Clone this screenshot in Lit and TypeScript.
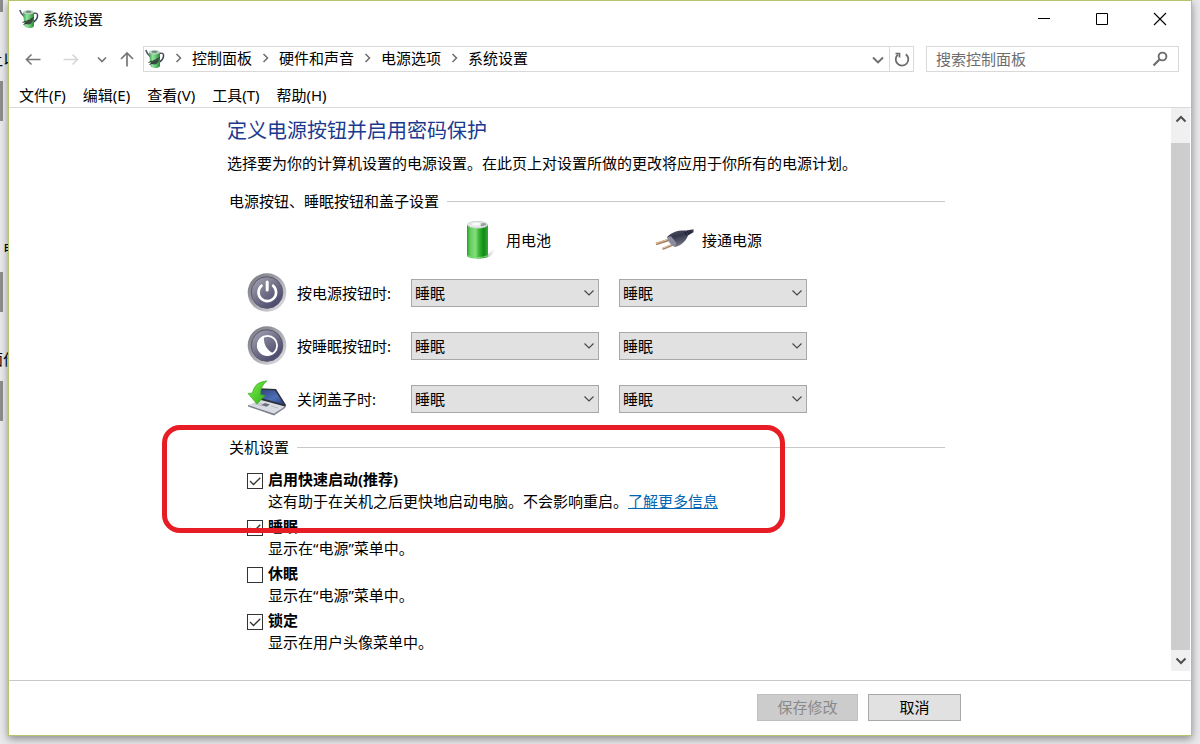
import { LitElement, html, css, svg, nothing } from "lit";
import { customElement, state } from "lit/decorators.js";

interface ActionRow {
  id: string;
  label: string;
  icon: unknown;
}

interface ShutdownOption {
  id: string;
  label: string;
  note: string;
  checked: boolean;
  link?: string;
}

const ACTIONS = ["不采取任何操作", "睡眠", "休眠", "关机"];

const powerPlanIcon = (cls: string) => html`
  <svg class=${cls} viewBox="0 0 20 20" aria-hidden="true">
    <defs>
      <linearGradient id="can" x1="0" x2="1">
        <stop offset="0" stop-color="#3f9a55" />
        <stop offset=".35" stop-color="#8fe79b" />
        <stop offset="1" stop-color="#2c8a3d" />
      </linearGradient>
    </defs>
    <path d="M14 4.500c3.500-1 5 0 4.500 3s-2 4.500-4 5.500" fill="none" stroke="#3c4654" stroke-width="1.500" />
    <path d="M.8 1c.6 2.500 1.800 4 4.400 6.400" fill="none" stroke="#4d5a68" stroke-width="1.500" />
    <path d="M4 3.500h11v13.500c-1 2.700-8 2.700-9.400 0z" fill="url(#can)" />
    <ellipse cx="9.500" cy="3.300" rx="5.500" ry="2.200" fill="#b9cfc0" />
    <ellipse cx="9.500" cy="2.900" rx="3" ry="1.100" fill="#6f8f7a" />
    <path d="M6 13.500c2-3 4.500-3.500 8.500-3l-2 3.500c-2 1.800-4 1.500-5.500 1z" fill="#3a4a3e" />
    <path d="M3.500 13.500l3.500-1.500M4.500 15.500l3-1.500M11 10.500l4-2" stroke="#27332b" />
  </svg>
`;

const batteryIcon = html`
  <svg class="big" viewBox="0 0 40 40" aria-hidden="true">
    <defs>
      <linearGradient id="cell" x1="0" x2="1">
        <stop offset="0" stop-color="#2b9a2b" />
        <stop offset=".15" stop-color="#5fcf59" />
        <stop offset=".4" stop-color="#86dc7e" />
        <stop offset=".58" stop-color="#35b331" />
        <stop offset=".8" stop-color="#0d8a17" />
        <stop offset="1" stop-color="#3aa63a" />
      </linearGradient>
      <linearGradient id="cellShade" x1="0" x2="1">
        <stop offset="0" stop-color="#888" stop-opacity=".8" />
        <stop offset="1" stop-color="#ccc" stop-opacity="0" />
      </linearGradient>
    </defs>
    <path d="M27 36l9-8c1 4-3 9-10 10z" fill="url(#cellShade)" />
    <path d="M8 5v31c2 3.500 19 3.500 21 0V5z" fill="url(#cell)" />
    <path d="M8.500 35.500c3 2.600 17 2.600 20 0" fill="none" stroke="#7fd977" />
    <ellipse cx="18.500" cy="4.800" rx="10.200" ry="3.400" fill="#e4e9e7" stroke="#b3c4b7" stroke-width=".6" />
    <path d="M20 3.600l6-.6 1.500 2-5 1.600z" fill="#9a9fa0" />
    <ellipse cx="17.500" cy="4" rx="4.500" ry="1.500" fill="#fafafa" />
  </svg>
`;

const plugIcon = html`
  <svg class="big" viewBox="0 0 40 40" aria-hidden="true">
    <defs>
      <linearGradient id="plug" x1="0" y1="0" x2=".4" y2="1">
        <stop offset="0" stop-color="#5a5c70" />
        <stop offset=".45" stop-color="#34364a" />
        <stop offset="1" stop-color="#777888" />
      </linearGradient>
    </defs>
    <path d="M1 24l14-4.500M7.500 29l12-5" stroke="#a67f5f" stroke-width="2.400" />
    <path d="M1 23.500l13-4.500M7.500 28.400l11-4.500" stroke="#e3c6a8" />
    <path d="M12 17c5-5.500 12-7 19-6.500l7.500-1.200v3L33 15.500c-2 5.500-6 9.500-13 11.500z" fill="url(#plug)" />
    <path d="M12 17l4-.8 5.500 6.800-1.500 4c-4-2-7-5-8-10z" fill="#8b8d9e" />
    <path d="M29.500 11.500l2.500 4M32.500 10.900l1.500 3.600M35 10.300l1 2.800" stroke="#1f2130" stroke-width="1.200" />
  </svg>
`;

const roundButton = (id: string, glyph: unknown) => html`
  <svg class="big" viewBox="0 0 40 40" aria-hidden="true">
    <defs>
      <linearGradient id="${id}-rim" x1="0" y1="0" x2="1" y2="1">
        <stop offset="0" stop-color="#70717a" />
        <stop offset=".45" stop-color="#a2a2aa" />
        <stop offset="1" stop-color="#e6e6ea" />
      </linearGradient>
      <linearGradient id="${id}-face" x1="0" y1="0" x2=".8" y2="1">
        <stop offset="0" stop-color="#a9a8b9" />
        <stop offset=".5" stop-color="#74738a" />
        <stop offset="1" stop-color="#45436a" />
      </linearGradient>
    </defs>
    <circle cx="20" cy="19.500" r="19.300" fill="url(#${id}-rim)" />
    <circle cx="20" cy="19.500" r="15.800" fill="url(#${id}-face)" stroke="#5a596c" />
    ${glyph}
  </svg>
`;

const powerGlyph = svg`
  <path d="M14.500 12.700a8.800 8.800 0 1 0 11.600 0" fill="none" stroke="#fff" stroke-width="2.600" stroke-linecap="round" />
  <path d="M20.200 9v8" stroke="#fff" stroke-width="3" stroke-linecap="round" />
`;

const moonGlyph = svg`
  <circle cx="20.500" cy="19.500" r="9.600" fill="none" stroke="#fff" stroke-width="1.800" />
  <path d="M17 9.800a10.200 10.200 0 1 0 9.500 17.700c-6.500-3-10.500-9.500-9.500-17.700z" fill="#fff" />
`;

const lidIcon = html`
  <svg class="big" viewBox="0 0 40 40" aria-hidden="true">
    <defs>
      <linearGradient id="screen" x1="0" y1="0" x2="1" y2="1">
        <stop offset="0" stop-color="#2b3c72" />
        <stop offset=".6" stop-color="#4c6fb5" />
        <stop offset="1" stop-color="#263b7c" />
      </linearGradient>
      <linearGradient id="arrow" x1="0" y1="0" x2="1" y2="1">
        <stop offset="0" stop-color="#7ff04e" />
        <stop offset="1" stop-color="#2fae16" />
      </linearGradient>
    </defs>
    <path d="M7 9l22 1 10 16-1 3-24-7z" fill="#2c3038" />
    <path d="M9 10.500l19 1 9 14-21-6z" fill="url(#screen)" />
    <path d="M1 26l13-5 24 6.500-11 7z" fill="#d9dce2" />
    <path d="M1 26l26 8.500 11-7v1.500l-11 7.500-26-9z" fill="#7d828d" />
    <path d="M14 26l4-2 5 1.400-3.500 2.400z" fill="#6b707c" />
    <path d="M7 24.500l8 2.500M10 23.400l5 1.500M24 27l7 2" stroke="#a9adb6" stroke-width=".7" />
    <path d="M20 2c-8 .5-13 4-14.500 12L1 14.500 10 25l8-8.500-4.500-.8C13.500 9 16 5 20 2z" fill="url(#arrow)" stroke="#36a81c" stroke-width=".7" />
  </svg>
`;

const separator = html`
  <svg class="separator" viewBox="0 0 27 14" aria-hidden="true">
    <path d="M11.500 3l4 4-4 4" fill="none" stroke="#6d6d6d" stroke-width="1.500" />
  </svg>
`;

@customElement("app-root")
export class AppRoot extends LitElement {
  static styles = css`
    :host {
      display: block;
      box-sizing: border-box;
      position: relative;
      height: 100vh;
      padding: 0 8px 8px 8px;
      overflow: hidden;
      background: #e9e9ec;
      color: #000;
      font-family: "Noto Sans", "Noto Sans CJK SC", sans-serif;
      font-size: 15px;
      line-height: 22px;
    }
    *, *::before, *::after { box-sizing: border-box; }
    button, input, select { font: inherit; color: inherit; margin: 0; border-radius: 0; }
    button { padding: 0; border: 0; background: none; }
    svg { display: block; }
    h1, h2, p { margin: 0; font-weight: 400; }

    /* Page behind the window, visible only along its left edge */
    .behind { position: absolute; inset: 0 auto 0 0; width: 8px; overflow: hidden; }
    .sliver { position: absolute; left: 0; width: 3px; height: 40px; background: #8c8c8c; }
    .scrap { position: absolute; left: -12px; white-space: nowrap; }

    .window {
      position: relative;
      display: flex;
      flex-direction: column;
      height: 100%;
      border: 1px solid #b3c66c;
      background: #fff;
      box-shadow: 0 3px 8px rgba(0, 0, 0, 0.4);
    }

    .titlebar { display: flex; align-items: center; height: 36px; padding: 0 2px 0 10px; flex: none; }
    .app-icon { width: 20px; height: 20px; flex: none; }
    .title { flex: 1; padding-left: 4px; }
    .control { width: 58px; height: 36px; display: grid; place-items: center; }
    .control svg { width: 14px; height: 14px; }

    .toolbar { display: flex; align-items: center; height: 43px; padding: 1px 12px 0; flex: none; }
    .nav { width: 24px; height: 26px; display: grid; place-items: center; margin-right: 14px; }
    .nav svg { width: 18px; height: 18px; }
    .nav-forward { margin-right: 10px; }
    .nav-small { width: 16px; margin-right: 6px; }
    .nav-up { margin-right: 4px; }
    .address { flex: 1; display: flex; align-items: center; height: 26px; padding-left: 1px; border: 1px solid #d9d9d9; }
    .crumbs { flex: 1; display: flex; align-items: center; padding-bottom: 2px; }
    .crumb { color: inherit; text-decoration: none; }
    .separator { width: 27px; height: 14px; }
    .drop { width: 23px; height: 24px; display: grid; place-items: center; }
    .refresh { width: 24px; height: 24px; display: grid; place-items: center; border-left: 1px solid #d9d9d9; }
    .drop svg, .refresh svg, .search svg { width: 18px; height: 18px; }
    .search { display: flex; align-items: center; width: 253px; height: 26px; margin-left: 12px; padding: 0 9px; border: 1px solid #d9d9d9; }
    .search-box { flex: 1; min-width: 0; height: 24px; padding: 0; border: 0; outline: 0; background: none; }
    .search-box::placeholder { color: #6d6d6d; opacity: 1; }

    .menubar { display: flex; gap: 17px; height: 28px; padding: 4px 10px 0; border-bottom: 1px solid #d9d9d9; flex: none; }
    .menubar button { height: 22px; }

    .body { flex: 1; display: flex; min-height: 0; }
    .page { flex: 1; min-width: 0; padding: 9px 226px 0 218px; }
    .heading { font-size: 20px; line-height: 28px; color: #1a3a8f; }
    .intro { margin-top: 7px; }
    .group { position: relative; padding-left: 2px; }
    .group-title { display: flex; align-items: center; gap: 8px; font-size: 15px; line-height: 22px; }
    .group-title::after { content: ""; flex: 1; height: 1px; background: #c8c8c8; }
    .buttons-group { margin-top: 16px; }
    .shutdown-group { margin-top: 11px; }

    .grid { display: grid; grid-template-columns: 144px 188px 188px; column-gap: 20px; align-items: center; padding: 8px 0 0 18px; }
    .source { display: flex; align-items: center; gap: 7px; height: 40px; margin-bottom: 6px; }
    .battery { grid-column: 2; padding-left: 48px; }
    .mains { padding-left: 36px; }
    .big { width: 40px; height: 40px; flex: none; }
    .action { display: flex; align-items: center; gap: 10px; height: 53px; white-space: nowrap; }
    .picker { display: grid; align-items: center; }
    .picker > * { grid-area: 1 / 1; }
    .select { appearance: none; width: 100%; height: 28px; padding: 0 24px 0 3px; border: 1px solid #a8a8a8; background: #e1e1e1; }
    .picker svg { width: 12px; height: 12px; justify-self: end; margin-right: 4px; pointer-events: none; }

    .options { display: grid; gap: 3px; padding: 10px 0 0 18px; }
    .option { display: grid; grid-template-columns: 16px 1fr; column-gap: 5px; align-items: center; }
    .check { appearance: none; width: 16px; height: 16px; margin-top: 3px; border: 1px solid #333; background: #fff center / 14px 14px no-repeat; }
    .check:checked {
      background-image: url("data:image/svg+xml,%3Csvg xmlns='http://www.w3.org/2000/svg' viewBox='0 0 14 14'%3E%3Cpath d='M2 7l3.500 3.500L12.300 3.700' fill='none' stroke='%23333' stroke-width='1.300'/%3E%3C/svg%3E");
    }
    .option-label { font-weight: 700; }
    .note { grid-column: 2; }
    .link { color: #0066b4; text-decoration: underline; }

    .marker {
      position: absolute;
      inset: -11px 160px auto -65px;
      height: 108px;
      border: 5px solid #e81c24;
      border-radius: 18px;
      pointer-events: none;
    }

    .scrollbar { display: flex; flex-direction: column; width: 19px; margin: 0 1px 9px 0; background: #f0f0f0; }
    .scroll-button { height: 21px; display: grid; place-items: center; }
    .scroll-button svg { width: 12px; height: 12px; }
    .thumb { flex: 1; margin-top: 14px; background: #cdcdcd; }

    .footer { display: flex; justify-content: flex-end; align-items: flex-start; gap: 10px; height: 55px; padding: 13px 230px 0 0; border-top: 1px solid #c8c8c8; flex: none; }
    .button { width: 93px; height: 27px; padding-bottom: 2px; border: 1px solid #a8a8a8; background: #e1e1e1; }
    .save { width: 101px; }
    .button:disabled { color: #8a8a8a; background: #ccc; border-color: #bfbfbf; }
  `;

  @state() private choice: Record<string, string> = {};

  private rows: ActionRow[] = [
    { id: "power", label: "按电源按钮时:", icon: roundButton("power", powerGlyph) },
    { id: "sleep", label: "按睡眠按钮时:", icon: roundButton("sleep", moonGlyph) },
    { id: "lid", label: "关闭盖子时:", icon: lidIcon },
  ];

  @state() private options: ShutdownOption[] = [
    { id: "fast", label: "启用快速启动(推荐)", note: "这有助于在关机之后更快地启动电脑。不会影响重启。", checked: true, link: "了解更多信息" },
    { id: "opt-sleep", label: "睡眠", note: "显示在“电源”菜单中。", checked: true },
    { id: "hibernate", label: "休眠", note: "显示在“电源”菜单中。", checked: false },
    { id: "lock", label: "锁定", note: "显示在用户头像菜单中。", checked: true },
  ];

  private pick(key: string, event: Event) {
    this.choice = { ...this.choice, [key]: (event.target as HTMLSelectElement).value };
  }

  private toggle(id: string) {
    this.options = this.options.map((o) => (o.id === id ? { ...o, checked: !o.checked } : o));
  }

  private picker(key: string, label: string) {
    const value = this.choice[key] ?? "睡眠";
    return html`
      <div class="picker">
        <select class="select" aria-label=${label} @change=${(e: Event) => this.pick(key, e)}>
          ${ACTIONS.map((a) => html`<option ?selected=${a === value}>${a}</option>`)}
        </select>
        <svg viewBox="0 0 12 12" aria-hidden="true">
          <path d="M1.500 3.500L6 8l4.500-4.500" fill="none" stroke="#444" stroke-width="1.100" />
        </svg>
      </div>
    `;
  }

  private titlebar() {
    return html`
      <header class="titlebar">
        ${powerPlanIcon("app-icon")}
        <span class="title">系统设置</span>
        <button class="control" aria-label="最小化">
          <svg viewBox="0 0 14 14"><path d="M1 6.500h12" stroke="#000" /></svg>
        </button>
        <button class="control" aria-label="最大化">
          <svg viewBox="0 0 14 14"><path d="M1.500 1.500h11v11h-11z" fill="none" stroke="#000" /></svg>
        </button>
        <button class="control" aria-label="关闭">
          <svg viewBox="0 0 14 14"><path d="M1 1l12 12M13 1L1 13" stroke="#000" stroke-width="1.100" /></svg>
        </button>
      </header>
    `;
  }

  private toolbar() {
    const crumbs = ["控制面板", "硬件和声音", "电源选项", "系统设置"];
    return html`
      <nav class="toolbar">
        <button class="nav" aria-label="后退">
          <svg viewBox="0 0 18 18"><path d="M16.500 9.500H2.500M7.500 4.500l-5 5 5 5" fill="none" stroke="#777" stroke-width="1.600" /></svg>
        </button>
        <button class="nav nav-forward" aria-label="前进">
          <svg viewBox="0 0 18 18"><path d="M1.500 9.500h14M10.500 4.500l5 5-5 5" fill="none" stroke="#d6d6d6" stroke-width="1.600" /></svg>
        </button>
        <button class="nav nav-small" aria-label="最近浏览的位置">
          <svg viewBox="0 0 18 18"><path d="M5 7.500l4 4 4-4" fill="none" stroke="#777" stroke-width="1.700" /></svg>
        </button>
        <button class="nav nav-up" aria-label="上移">
          <svg viewBox="0 0 18 18"><path d="M9 16.500V3M3 9l6-6 6 6" fill="none" stroke="#777" stroke-width="1.700" /></svg>
        </button>
        <div class="address">
          ${powerPlanIcon("app-icon")}
          <div class="crumbs">
            ${crumbs.map((c) => html`${separator}<a class="crumb" href="#">${c}</a>`)}
          </div>
          <button class="drop" aria-label="以前的位置">
            <svg viewBox="0 0 18 18"><path d="M4 7.500l5 5 5-5" fill="none" stroke="#6d6d6d" stroke-width="1.900" /></svg>
          </button>
          <button class="refresh" aria-label="刷新">
            <svg viewBox="0 0 18 18">
              <path d="M12.800 4.300a6.300 6.300 0 1 1-7.800.2" fill="none" stroke="#6d6d6d" stroke-width="1.800" />
              <path d="M2.500 3.500h4v4" fill="none" stroke="#6d6d6d" stroke-width="1.700" />
            </svg>
          </button>
        </div>
        <label class="search">
          <input class="search-box" type="text" placeholder="搜索控制面板" aria-label="搜索控制面板" />
          <svg viewBox="0 0 18 18" aria-hidden="true">
            <circle cx="11.500" cy="6.500" r="3.900" fill="none" stroke="#6d6d6d" stroke-width="1.900" />
            <path d="M8.700 9.300l-6.200 6.200" stroke="#6d6d6d" stroke-width="2.200" />
          </svg>
        </label>
      </nav>
    `;
  }

  private powerGroup() {
    return html`
      <section class="group buttons-group">
        <h2 class="group-title">电源按钮、睡眠按钮和盖子设置</h2>
        <div class="grid">
          <div class="source battery">${batteryIcon}<span>用电池</span></div>
          <div class="source mains">${plugIcon}<span>接通电源</span></div>
          ${this.rows.map(
            (r) => html`
              <div class="action">${r.icon}<span>${r.label}</span></div>
              ${this.picker(`${r.id}-battery`, `${r.label} 用电池`)}
              ${this.picker(`${r.id}-mains`, `${r.label} 接通电源`)}
            `,
          )}
        </div>
      </section>
    `;
  }

  private shutdownGroup() {
    return html`
      <section class="group shutdown-group">
        <h2 class="group-title">关机设置</h2>
        <div class="options">
          ${this.options.map(
            (o) => html`
              <div class="option">
                <input class="check" type="checkbox" id=${o.id} .checked=${o.checked} @change=${() => this.toggle(o.id)} />
                <label class="option-label" for=${o.id}>${o.label}</label>
                <p class="note">${o.note}${o.link ? html`<a class="link" href="#">${o.link}</a>` : nothing}</p>
              </div>
            `,
          )}
        </div>
        <div class="marker"></div>
      </section>
    `;
  }

  render() {
    return html`
      <div class="behind" aria-hidden="true">
        <span class="sliver" style="top:-28px"></span>
        <span class="scrap" style="top:48px">让以</span>
        <span class="sliver" style="top:81px"></span>
        <span class="scrap" style="top:237px">　电</span>
        <span class="sliver" style="top:272px"></span>
        <span class="scrap" style="top:348px">面作</span>
        <span class="sliver" style="top:381px"></span>
      </div>
      <div class="window">
        ${this.titlebar()} ${this.toolbar()}
        <div class="menubar">
          ${["文件(F)", "编辑(E)", "查看(V)", "工具(T)", "帮助(H)"].map((m) => html`<button>${m}</button>`)}
        </div>
        <div class="body">
          <main class="page">
            <h1 class="heading">定义电源按钮并启用密码保护</h1>
            <p class="intro">选择要为你的计算机设置的电源设置。在此页上对设置所做的更改将应用于你所有的电源计划。</p>
            ${this.powerGroup()} ${this.shutdownGroup()}
          </main>
          <div class="scrollbar">
            <button class="scroll-button" aria-label="向上滚动">
              <svg viewBox="0 0 12 12"><path d="M1.500 8.500L6 4l4.500 4.500" fill="none" stroke="#505050" stroke-width="2" /></svg>
            </button>
            <div class="thumb"></div>
            <button class="scroll-button" aria-label="向下滚动">
              <svg viewBox="0 0 12 12"><path d="M1.500 3.500L6 8l4.500-4.500" fill="none" stroke="#505050" stroke-width="2" /></svg>
            </button>
          </div>
        </div>
        <footer class="footer">
          <button class="button save" disabled>保存修改</button>
          <button class="button">取消</button>
        </footer>
      </div>
    `;
  }
}
